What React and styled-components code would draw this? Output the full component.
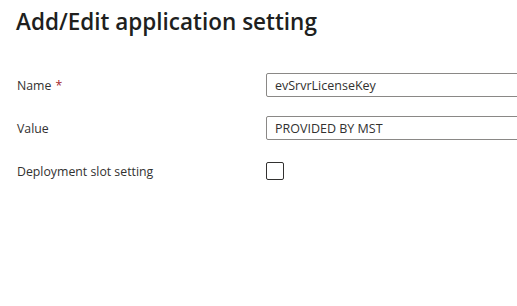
import styled, { createGlobalStyle } from "styled-components";

const GlobalStyle = createGlobalStyle`
    html, body {
        margin: 0;
        background: #ffffff;
        overflow: hidden;
    }
    body {
        font-family: "Open Sans", "Noto Sans", sans-serif;
        color: #323130;
    }
`;

const Panel = styled.div`
    width: 517px;
    height: 306px;
    box-sizing: border-box;
    padding: 7px 0 0 16px;
    overflow: hidden;
`;

const Title = styled.h1`
    margin: 0;
    font-size: 22.5px;
    font-weight: 600;
    line-height: 30px;
    color: #201f1e;
    white-space: nowrap;
`;

const Form = styled.div`
    display: grid;
    grid-template-columns: 250px 300px;
    row-gap: 19px;
    margin-top: 36px;
    align-items: center;
`;

const Label = styled.label`
    font-size: 12.3px;
    color: #323130;
    white-space: nowrap;
    padding-left: 1px;
`;

const Required = styled.span`
    color: #a4262c;
    margin-left: 4px;
`;

const TextInput = styled.input`
    box-sizing: border-box;
    width: 300px;
    height: 24px;
    border: 1px solid #8a8886;
    border-radius: 2px;
    padding: 0 8px;
    font-family: inherit;
    font-size: 12.5px;
    color: #323130;
    outline: none;
`;

const Check = styled.span`
    display: block;
    box-sizing: border-box;
    width: 18px;
    height: 18px;
    border: 1px solid #323130;
    border-radius: 2px;
    margin: 3px 0;
`;

export default function App() {
    return (
        <>
            <GlobalStyle />
            <Panel>
                <Title>Add/Edit application setting</Title>
                <Form>
                    <Label>
                        Name<Required>*</Required>
                    </Label>
                    <TextInput defaultValue="evSrvrLicenseKey" />
                    <Label>Value</Label>
                    <TextInput defaultValue="PROVIDED BY MST" />
                    <Label>Deployment slot setting</Label>
                    <Check />
                </Form>
            </Panel>
        </>
    );
}
